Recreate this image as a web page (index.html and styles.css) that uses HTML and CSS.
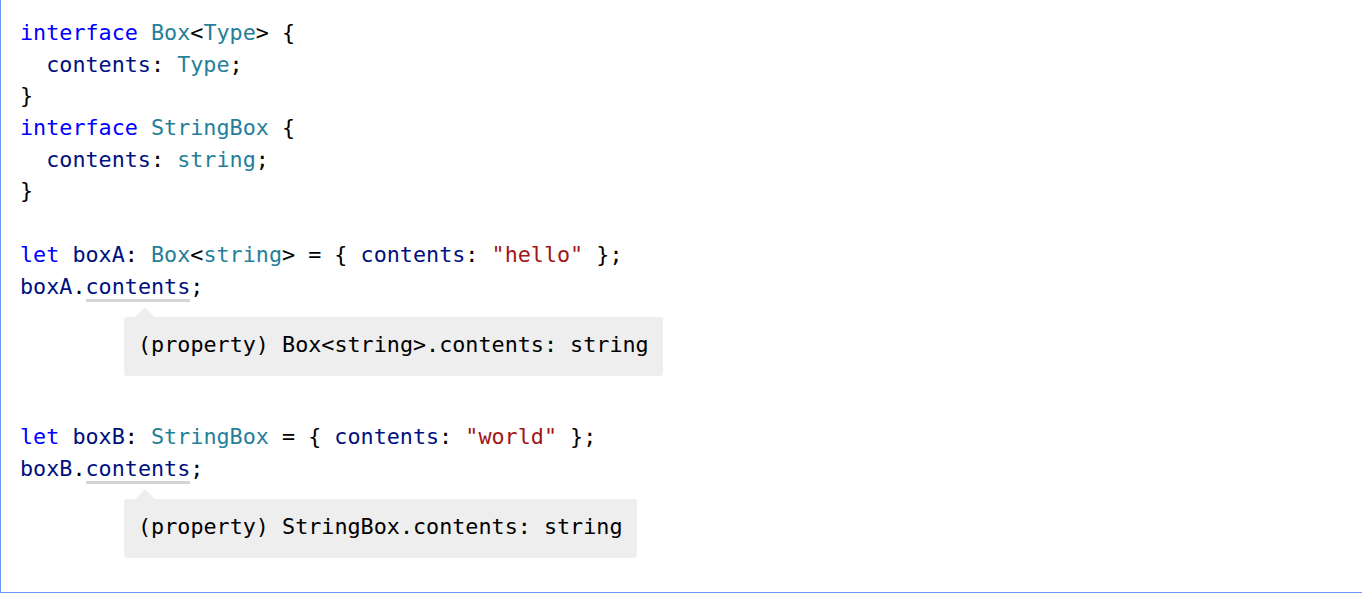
FILE: index.html
```html
<!DOCTYPE html>
<html>
<head>
<meta charset="utf-8">
<link rel="stylesheet" href="styles.css">
</head>
<body>
<div class="frame">
  <div class="code">
    <div class="line"><span class="kw">interface</span> <span class="ty">Box</span>&lt;<span class="ty">Type</span>&gt; {</div>
    <div class="line">  <span class="id">contents</span>: <span class="ty">Type</span>;</div>
    <div class="line">}</div>
    <div class="line"><span class="kw">interface</span> <span class="ty">StringBox</span> {</div>
    <div class="line">  <span class="id">contents</span>: <span class="ty">string</span>;</div>
    <div class="line">}</div>
    <div class="line"> </div>
    <div class="line"><span class="kw">let</span> <span class="id">boxA</span>: <span class="ty">Box</span>&lt;<span class="ty">string</span>&gt; = { <span class="id">contents</span>: <span class="str">"hello"</span> };</div>
    <div class="line"><span class="id">boxA</span>.<span class="id hover">contents</span>;</div>
    <div class="popover"><span class="arrow"></span>(property) Box&lt;string&gt;.contents: string</div>
    <div class="line"> </div>
    <div class="line"><span class="kw">let</span> <span class="id">boxB</span>: <span class="ty">StringBox</span> = { <span class="id">contents</span>: <span class="str">"world"</span> };</div>
    <div class="line"><span class="id">boxB</span>.<span class="id hover">contents</span>;</div>
    <div class="popover"><span class="arrow"></span>(property) StringBox.contents: string</div>
  </div>
</div>
</body>
</html>
```
FILE: styles.css
```css
html, body {
  margin: 0;
  padding: 0;
  background: #ffffff;
}
.frame {
  box-sizing: border-box;
  width: 1362px;
  height: 593px;
  border-left: 1px solid #6e97f5;
  border-bottom: 1px solid #6e97f5;
  padding: 17px 0 0 19px;
  overflow: hidden;
}
.code {
  font-family: "DejaVu Sans Mono", "Liberation Mono", monospace;
  font-size: 21.75px;
  line-height: 31.7px;
  color: #000000;
  white-space: pre;
  display: flex;
  flex-direction: column;
  align-items: flex-start;
}
.line {
  height: 31.7px;
}
.kw { color: #0000ff; }
.ty { color: #267f99; }
.id { color: #001080; }
.str { color: #a31515; }
.hover {
  border-bottom: 3px solid #d4d4d4;
}
.popover {
  position: relative;
  margin: 15px 0 13px 104px;
  padding: 12px 14px 15.3px 14px;
  background: #eeeeee;
  border-radius: 3px;
  color: #000000;
  height: 31.7px;
}
.arrow {
  position: absolute;
  left: 11px;
  top: -10px;
  width: 20px;
  height: 10px;
  background: #eeeeee;
  clip-path: polygon(50% 0, 100% 100%, 0 100%);
}
```
